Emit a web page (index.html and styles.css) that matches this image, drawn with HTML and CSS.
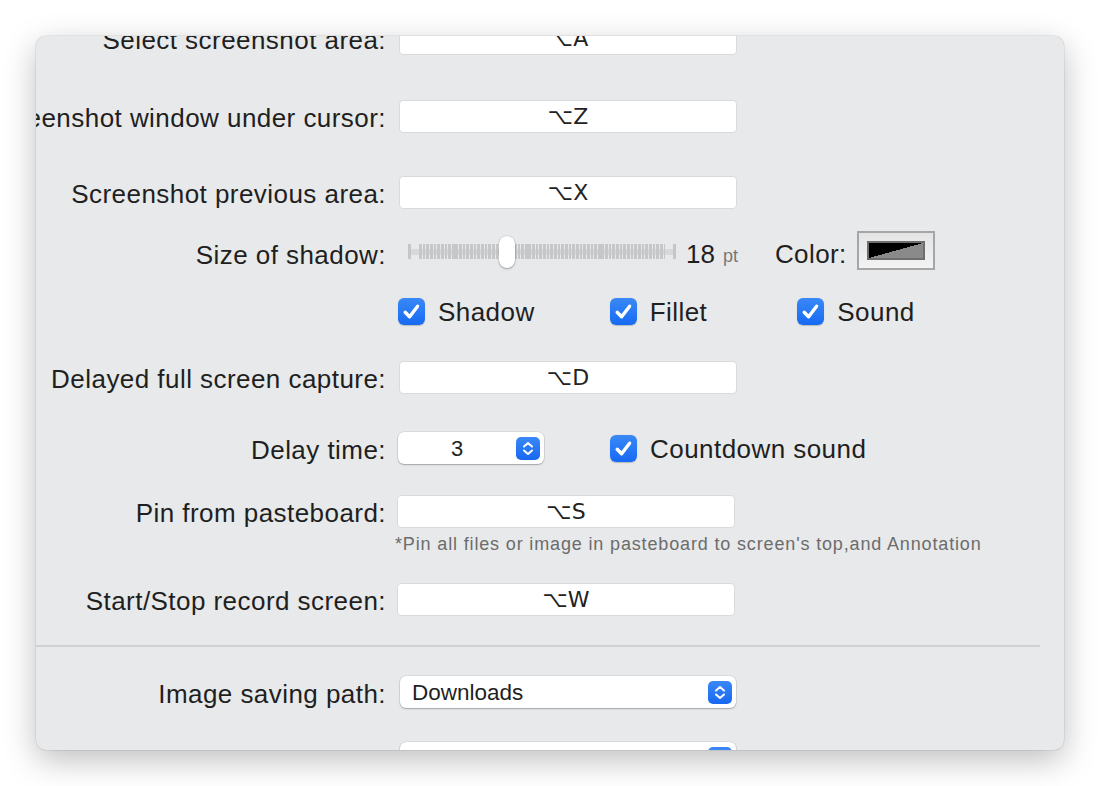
FILE: index.html
```html
<!DOCTYPE html>
<html>
<head>
<meta charset="utf-8">
<link rel="stylesheet" href="styles.css">
</head>
<body>
<div class="window">
  <div class="content">
    <div class="row r1">
      <div class="lbl"><span>Select screenshot area:</span></div>
      <div class="field">⌥A</div>
    </div>
    <div class="row r2">
      <div class="lbl"><span>Screenshot window under cursor:</span></div>
      <div class="field">⌥Z</div>
    </div>
    <div class="row r3">
      <div class="lbl"><span>Screenshot previous area:</span></div>
      <div class="field">⌥X</div>
    </div>
    <div class="row r4">
      <div class="lbl"><span>Size of shadow:</span></div>
      <div class="slider">
        <div class="track"></div>
        <div class="cap cap-l"></div>
        <div class="ticks"></div>
        <div class="cap cap-r"></div>
        <div class="thumb"></div>
      </div>
      <span class="num">18</span>
      <span class="unit">pt</span>
      <span class="color-lbl">Color:</span>
      <div class="well"><div class="swatch"></div></div>
    </div>
    <div class="row r5">
      <div class="lbl"></div>
      <label class="check c1"><span class="box"><svg viewBox="0 0 27 27"><path d="M7.2 14.2 L11.6 18.8 L19.6 8.2"/></svg></span><span>Shadow</span></label>
      <label class="check c2"><span class="box"><svg viewBox="0 0 27 27"><path d="M7.2 14.2 L11.6 18.8 L19.6 8.2"/></svg></span><span>Fillet</span></label>
      <label class="check c3"><span class="box"><svg viewBox="0 0 27 27"><path d="M7.2 14.2 L11.6 18.8 L19.6 8.2"/></svg></span><span>Sound</span></label>
    </div>
    <div class="row r6">
      <div class="lbl"><span>Delayed full screen capture:</span></div>
      <div class="field">⌥D</div>
    </div>
    <div class="row r7">
      <div class="lbl"><span>Delay time:</span></div>
      <div class="popup small"><span class="pv">3</span><span class="step"><svg viewBox="0 0 24 22"><path d="M8 9 L12 5.5 L16 9 M8 13 L12 16.5 L16 13"/></svg></span></div>
      <label class="check c4"><span class="box"><svg viewBox="0 0 27 27"><path d="M7.2 14.2 L11.6 18.8 L19.6 8.2"/></svg></span><span>Countdown sound</span></label>
    </div>
    <div class="row r8">
      <div class="lbl"><span>Pin from pasteboard:</span></div>
      <div class="field shift">⌥S</div>
    </div>
    <div class="hint">*Pin all files or image in pasteboard to screen's top,and Annotation</div>
    <div class="row r9">
      <div class="lbl"><span>Start/Stop record screen:</span></div>
      <div class="field shift">⌥W</div>
    </div>
    <div class="sep"></div>
    <div class="row r10">
      <div class="lbl"><span>Image saving path:</span></div>
      <div class="popup wide"><span class="pv">Downloads</span><span class="step"><svg viewBox="0 0 24 22"><path d="M8 9 L12 5.5 L16 9 M8 13 L12 16.5 L16 13"/></svg></span></div>
    </div>
    <div class="row r11">
      <div class="lbl"><span></span></div>
      <div class="popup wide"><span class="pv"></span><span class="step"><svg viewBox="0 0 24 22"><path d="M8 9 L12 5.5 L16 9 M8 13 L12 16.5 L16 13"/></svg></span></div>
    </div>
  </div>
</div>
</body>
</html>
```

FILE: styles.css
```css
html, body {
  margin: 0;
  padding: 0;
  background: #ffffff;
}
body {
  width: 1100px;
  height: 786px;
  overflow: hidden;
  font-family: "Liberation Sans", Arial, sans-serif;
  color: #1f1f1f;
}
.window {
  margin: 36px 0 0 36px;
  width: 1028px;
  height: 714px;
  border-radius: 10px;
  background: #e7e9ea;
  overflow: hidden;
  box-shadow: 0 10px 32px rgba(0, 0, 0, 0.26), 0 0 0 0.5px rgba(0, 0, 0, 0.12);
}
.content {
  margin-top: -15px;
}
.row {
  display: flex;
  align-items: center;
  height: 34px;
}
.lbl {
  flex: none;
  width: 350px;
  display: flex;
  justify-content: flex-end;
  white-space: nowrap;
  font-size: 26px;
  letter-spacing: 0.45px;
  line-height: 34px;
  margin-right: 13px;
  padding-top: 4px;
}
.field {
  box-sizing: border-box;
  width: 338px;
  height: 33px;
  background: #ffffff;
  border: 1px solid #d9dadb;
  border-radius: 4px;
  text-align: center;
  font-family: "DejaVu Sans", sans-serif;
  font-size: 22px;
  line-height: 31px;
  color: #222;
}
.field.shift {
  margin-left: -2px;
}
.r2 { margin-top: 44px; }
.r3 { margin-top: 42px; }
.r4 { margin-top: 24px; height: 40px; }
.r5 { margin-top: 23px; height: 30px; }
.r6 { margin-top: 34px; }
.r7 { margin-top: 37px; }
.r8 { margin-top: 29px; }
.hint {
  margin-top: 5px;
  height: 22px;
  line-height: 22px;
  padding-left: 359px;
  font-size: 18px;
  letter-spacing: 0.85px;
  color: #6c6c6c;
  white-space: nowrap;
}
.r9 { margin-top: 27px; }
.sep {
  margin-top: 29px;
  margin-right: 24px;
  height: 2px;
  background: #cfd2d4;
}
.r10 { margin-top: 28px; }
.r11 { margin-top: 32px; }

/* slider */
.slider {
  position: relative;
  flex: none;
  width: 268px;
  height: 40px;
  margin-left: 9px;
}
.track {
  position: absolute;
  left: 2px;
  right: 2px;
  top: 16px;
  height: 6px;
  background: #d6d8d9;
}
.cap {
  position: absolute;
  top: 11px;
  width: 3px;
  height: 15px;
  background: #c4c6c7;
}
.cap-l { left: 0; }
.cap-r { right: 0; }
.ticks {
  position: absolute;
  left: 11px;
  right: 11px;
  top: 11px;
  height: 15px;
  background: repeating-linear-gradient(to right, #c5c7c8 0, #c5c7c8 2.7px, transparent 2.7px, transparent 3.65px);
}
.thumb {
  position: absolute;
  left: 91px;
  top: 3px;
  width: 16px;
  height: 32px;
  border-radius: 8px;
  background: #ffffff;
  box-shadow: 0 1px 2px rgba(0, 0, 0, 0.3), 0 0 0 0.5px rgba(0, 0, 0, 0.12);
}
.num {
  margin-left: 10px;
  font-size: 26px;
  padding-top: 2px;
}
.unit {
  margin-left: 8px;
  font-size: 18px;
  color: #777;
  padding-top: 6px;
}
.color-lbl {
  margin-left: 37px;
  font-size: 26px;
  letter-spacing: 0.4px;
  padding-top: 2px;
}
.well {
  box-sizing: border-box;
  margin-left: 10px;
  width: 78px;
  height: 39px;
  margin-top: -6px;
  border: 2px solid #a6a6a6;
  background: linear-gradient(#e4e4e4, #f3f3f3);
  padding: 8px;
}
.swatch {
  box-sizing: border-box;
  width: 100%;
  height: 100%;
  border: 2px solid #6e6e6e;
  background: linear-gradient(to bottom right, #000 50%, #8a8a8a 50%);
}

/* checkbox */
.check {
  display: flex;
  align-items: center;
  font-size: 26px;
  letter-spacing: 0.45px;
}
.check .box {
  flex: none;
  width: 27px;
  height: 27px;
  border-radius: 6px;
  background: linear-gradient(#3a89f8, #166af2);
  box-shadow: 0 0.5px 1px rgba(0, 0, 0, 0.2);
  margin-right: 13px;
}
.check svg {
  display: block;
  width: 27px;
  height: 27px;
  fill: none;
  stroke: #fff;
  stroke-width: 3.4;
  stroke-linecap: round;
  stroke-linejoin: round;
}
.check span:last-child { padding-top: 3px; }
.c1 { margin-left: -1px; }
.c2 { margin-left: 75px; }
.c3 { margin-left: 90px; }
.c4 { margin-left: 66px; }

/* popup */
.popup {
  box-sizing: border-box;
  display: flex;
  align-items: center;
  height: 32px;
  background: #fff;
  border-radius: 6px;
  box-shadow: 0 1px 1.5px rgba(0, 0, 0, 0.25), 0 0 0 0.5px rgba(0, 0, 0, 0.12);
  padding-right: 4px;
}
.popup.small {
  width: 146px;
  margin-left: -1px;
}
.popup.small .pv {
  flex: 1;
  text-align: center;
  font-size: 22px;
  padding-top: 2px;
}
.popup.wide {
  width: 336px;
  margin-left: 1px;
}
.popup.wide .pv {
  flex: 1;
  padding-left: 12px;
  font-size: 22.5px;
  padding-top: 2px;
}
.step {
  flex: none;
  width: 24px;
  height: 23px;
  border-radius: 5px;
  background: linear-gradient(#3b88f8, #1668f1);
}
.step svg {
  display: block;
  width: 24px;
  height: 23px;
  fill: none;
  stroke: #fff;
  stroke-width: 2;
  stroke-linecap: round;
  stroke-linejoin: round;
}
```
